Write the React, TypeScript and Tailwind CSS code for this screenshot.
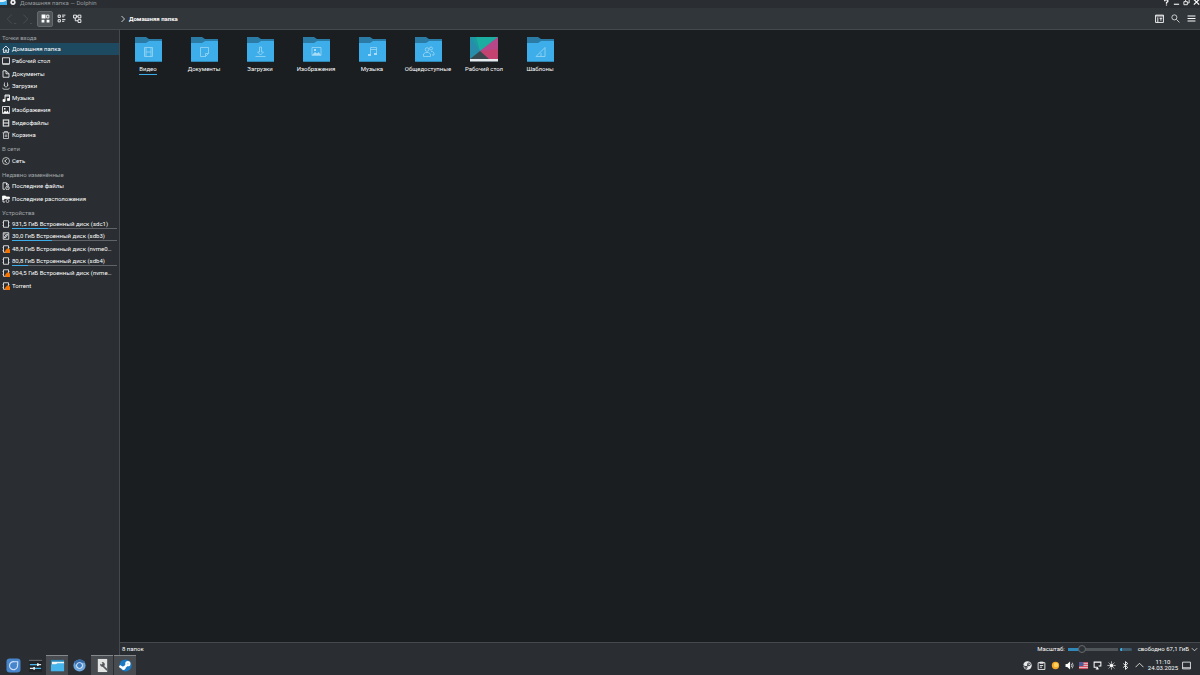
import type { ReactNode } from "react";

type IconProps = { children: ReactNode; className?: string };

function Icon({ children, className = "size-2" }: IconProps) {
  return (
    <svg viewBox="0 0 16 16" fill="none" stroke="currentColor" strokeWidth="1.6" className={`shrink-0 ${className}`} aria-hidden="true">
      {children}
    </svg>
  );
}

const glyphs = {
  home: <path d="M1 9 8 2l7 7M3 8v7h3.500v-5h3v5H13V8" />,
  desktop: <path d="M1 1.500h14v12H1zM1 14.500h14" />,
  document: <path d="M2 1.500h6l6 6v7H2zM8 1.500v6h6" />,
  download: <path d="M5 1v7M11 1v7M3 6l5 4.500L13 6M1 11.500l2 3h10l2-3" strokeWidth="1.300" />,
  music: (
    <>
      <path d="M6 13V2h9v9M6 4h9" strokeWidth="1.800" />
      <path d="M2 11h4v4H2zM11 9h4v4h-4z" fill="currentColor" />
    </>
  ),
  image: (
    <>
      <path d="M1 1h14v14H1z" />
      <path d="m2 14 4-5 2.500 3L11 9l3 5zM4 4h3v3H4z" fill="currentColor" stroke="none" />
    </>
  ),
  video: <path d="M2.500 1v14M13.500 1v14M3 8h10M3 2h10M3 14h10" strokeWidth="2" />,
  trash: <path d="M1 3.500h14M5 3V1h6v2M3 4v11h10V4M6.500 7v5M9.500 7v5" strokeWidth="1.300" />,
  network: (
    <>
      <circle cx="8" cy="8" r="7" strokeWidth="1.300" />
      <path d="m10.500 3.500-5 4.500 5 4.500M5 8h3" strokeWidth="1.300" />
    </>
  ),
  recentFile: (
    <>
      <path d="M6 14.500H2v-13h7l4 4V7M9 2v4h4" />
      <circle cx="11" cy="12" r="3.500" />
      <path d="M11 10v2h2" strokeWidth="1" />
    </>
  ),
  recentPlace: (
    <>
      <path d="M1 2h6l1.500 2H15v3H6l-2 2H1z" fill="currentColor" />
      <path d="M2 8v6h4" />
      <circle cx="11" cy="12" r="3" strokeWidth="1.300" />
    </>
  ),
  disk: <path d="M3 1.500h10v13H3zM1.500 4v1M14.500 4v1M1.500 11v1M14.500 11v1" />,
  rootDisk: (
    <>
      <path d="M2.500 1.500h11v13h-11z" />
      <path d="m5 12 1-4 5-4-1.500 5zM4 4h3" />
    </>
  ),
  lockedDisk: (
    <>
      <path d="M3 1.500h10v13H3zM1.500 4v1M14.500 4v1M1.500 11v1" />
      <path d="m6 12 4-5h4l2 3v6H7z" fill="#f67400" stroke="none" />
    </>
  ),
};

type GlyphName = keyof typeof glyphs;
type Place = { icon: GlyphName; label: string; used?: string };

const places: Place[] = [
  { icon: "home", label: "Домашняя папка" },
  { icon: "desktop", label: "Рабочий стол" },
  { icon: "document", label: "Документы" },
  { icon: "download", label: "Загрузки" },
  { icon: "music", label: "Музыка" },
  { icon: "image", label: "Изображения" },
  { icon: "video", label: "Видеофайлы" },
  { icon: "trash", label: "Корзина" },
];
const remote: Place[] = [{ icon: "network", label: "Сеть" }];
const recent: Place[] = [
  { icon: "recentFile", label: "Последние файлы" },
  { icon: "recentPlace", label: "Последние расположения" },
];
const devices: Place[] = [
  { icon: "disk", label: "931,5 ГиБ Встроенный диск (sdc1)", used: "34%" },
  { icon: "rootDisk", label: "30,0 ГиБ Встроенный диск (sdb3)", used: "38%" },
  { icon: "lockedDisk", label: "48,8 ГиБ Встроенный диск (nvme0…" },
  { icon: "disk", label: "80,8 ГиБ Встроенный диск (sdb4)", used: "15%" },
  { icon: "lockedDisk", label: "904,5 ГиБ Встроенный диск (nvme…" },
  { icon: "lockedDisk", label: "Torrent" },
];

function PlaceGroup({ title, items, active, className }: { title: string; items: Place[]; active?: string; className: string }) {
  return (
    <section>
      <h2 className="truncate pl-[2px] text-[6px] leading-[10px] text-[#a1a5a8]">{title}</h2>
      <ul className={`grid auto-rows-fr grid-cols-1 ${className}`}>
        {items.map((item) => (
          <li key={item.label} className="min-h-0 min-w-0">
            <a
              href="#"
              className={`flex h-full items-center gap-[2px] pl-[2px] pr-[2px] ${item.label === active ? "bg-[#1e4a61]" : ""}`}
            >
              <Icon>{glyphs[item.icon]}</Icon>
              <span className="flex min-w-0 flex-1 flex-col">
                <span className="whitespace-nowrap leading-[8px]">{item.label}</span>
                {item.used && (
                  <span className="h-px bg-[#606468]">
                    <span className="block h-px bg-[#3daee9]" style={{ width: item.used }} />
                  </span>
                )}
              </span>
            </a>
          </li>
        ))}
      </ul>
    </section>
  );
}

const folderMarks: Record<string, ReactNode> = {
  "Видео": <path d="M9.500 10.500h8v9h-8zM11 10.500v9M16 10.500v9M11 15h5" />,
  "Документы": <path d="M9.500 10.500h8v6l-3 3h-5zM14.500 19.500v-3h3" />,
  "Загрузки": <path d="M12.500 10v5h-2l3 3 3-3h-2v-5zM8.500 19.500h10" />,
  "Изображения": (
    <>
      <path d="M9 10.500h9v8H9z" />
      <path d="m9 18 3-3 2 1.500 1.500-1.500 2.500 3zM11 12h2v2h-2z" fill="#a9dcf7" stroke="none" />
    </>
  ),
  "Музыка": (
    <>
      <path d="M11.500 18v-7.500h6V17M11.500 12.500h6" />
      <path d="M9 17h3v2H9zM15 16h3v2h-3z" fill="#a9dcf7" stroke="none" />
    </>
  ),
  "Общедоступные": (
    <>
      <circle cx="12" cy="12.500" r="1.800" />
      <circle cx="16" cy="11.500" r="1.500" />
      <path d="M8.500 19.500v-2.500l2-1.500h3l2 1.500v2.500zM16 14.500h1.500l1.500 1.500v2h-2" />
    </>
  ),
  "Шаблоны": <path d="M9 19.500h9v-9zM14 19v-3" />,
};

function FolderIcon({ name }: { name: string }) {
  if (name === "Рабочий стол") {
    return (
      <svg viewBox="0 0 28 25" className="h-[25px] w-7" aria-hidden="true">
        <path d="M0 0h28v22H0z" fill="#1e9aa5" />
        <path d="M6 0h22L10 14z" fill="#1abc9c" opacity=".6" />
        <path d="M0 0v22l10-8z" fill="#2f86ad" opacity=".6" />
        <path d="M28 0v22H18l-8-8z" fill="#b8478a" />
        <path d="m28 12-18 2 8 8h10z" fill="#c9405f" opacity=".6" />
        <path d="m10 14 9 8H0z" fill="#3b474f" />
        <path d="M0 22h28v3H0z" fill="#e8ebed" />
        <path d="M0 24.500h28" stroke="#7c868c" />
      </svg>
    );
  }
  return (
    <svg viewBox="0 0 27 25" className="h-[25px] w-[27px]" fill="none" aria-hidden="true">
      <path d="M0 0h11l3 2h13v12H0z" fill="#2a7ba5" />
      <path d="M0 6h11l3-2h13v21H0z" fill="#3daee9" />
      <path d="M0 24.500h27" stroke="#3188b5" />
      <g stroke="#a9dcf7" strokeWidth=".7">{folderMarks[name]}</g>
    </svg>
  );
}

const folders = ["Видео", "Документы", "Загрузки", "Изображения", "Музыка", "Общедоступные", "Рабочий стол", "Шаблоны"];

function IconButton({ label, className = "", children }: { label: string; className?: string; children: ReactNode }) {
  return (
    <button type="button" aria-label={label} className={`flex shrink-0 items-center justify-center ${className}`}>
      {children}
    </button>
  );
}

function TitleBar() {
  return (
    <div className="flex h-2 shrink-0 items-start bg-[#2a2e32] text-[#95999c]">
      <svg viewBox="0 0 7 6" className="h-[6px] w-[7px]" aria-hidden="true">
        <path d="M0 0h7v5H0z" fill="#3daee9" />
        <path d="M0 0h6v1L3 2H0z" fill="#e5f3fa" />
      </svg>
      <svg viewBox="0 0 8 8" className="ml-[3px] size-[6px]" aria-hidden="true">
        <circle cx="4" cy="3" r="3.500" fill="#eff0f1" />
        <circle cx="4" cy="3" r="1.300" fill="#2a2e32" />
      </svg>
      <span className="pl-1 text-[6px] leading-[6px]">Домашняя папка — Dolphin</span>
      <div className="ml-auto flex gap-[2px] text-[#fcfcfc]">
        <IconButton label="Справка" className="h-[5px] w-2">
          <Icon className="size-[7px]"><path d="M4 5V2h7v4L8 8v3M8 12.500V15" strokeWidth="2.800" /></Icon>
        </IconButton>
        <IconButton label="Свернуть" className="h-[5px] w-2">
          <Icon className="size-[7px]"><path d="M2 12h12" strokeWidth="2.500" /></Icon>
        </IconButton>
        <IconButton label="Восстановить" className="h-[5px] w-2">
          <Icon className="size-[7px]"><path d="M2 6h8v7H2zM6 5V1h8v8h-3" strokeWidth="2" /></Icon>
        </IconButton>
        <IconButton label="Закрыть" className="h-[5px] w-2">
          <Icon className="size-[7px]"><path d="m2 1 12 12M14 1 2 13" strokeWidth="2.800" /></Icon>
        </IconButton>
      </div>
    </div>
  );
}

function ToolBar() {
  return (
    <header className="flex h-[22px] shrink-0 items-center border-b border-[#44494d] bg-[#31363b] text-[#fcfcfc]">
      <IconButton label="Назад" className="ml-[3px] size-4 text-[#4a4f53]">
        <Icon className="size-3"><path d="M9 2 3 8l6 6M12 14h3" strokeWidth="1.200" /></Icon>
      </IconButton>
      <IconButton label="Вперёд" className="size-4 text-[#4a4f53]">
        <Icon className="size-3"><path d="m3 2 6 6-6 6M12 14h3" strokeWidth="1.200" /></Icon>
      </IconButton>
      <IconButton label="Значки" className="ml-[2px] size-4 rounded-[2px] border border-[#65696d] bg-[#50555a]">
        <Icon className="size-[9px]">
          <path d="M1 1h7v7H1zM1 10h5v5H1zM10 10h5v5h-5z" fill="currentColor" stroke="none" />
          <path d="M10 2h4v5h-4z" />
        </Icon>
      </IconButton>
      <IconButton label="Компактный вид" className="size-4">
        <Icon className="size-[9px]">
          <path d="M2 2h4v4H2zM2 10h4v4H2zM9 2h6M9 5h4M9 10h6M9 13h4" />
        </Icon>
      </IconButton>
      <IconButton label="Дерево" className="size-4">
        <Icon className="size-[9px]">
          <path d="M1 2h5v5H1zM9 2h5v5H9zM9 10h5v5H9zM4 7v5h5M6 4h3" />
        </Icon>
      </IconButton>
      <nav className="ml-[34px] flex items-center gap-[2px] font-bold">
        <Icon><path d="m5 2 6 6-6 6" strokeWidth="1.500" /></Icon>
        <a href="#" className="text-[6px] leading-[8px]">Домашняя папка</a>
      </nav>
      <div className="ml-auto flex pr-px">
        <IconButton label="Разделить" className="size-4">
          <Icon className="size-[9px]"><path d="M1 2h14v13H1zM1 3.500h14M5 6v9M8 7.500h5M10.500 7v5" /></Icon>
        </IconButton>
        <IconButton label="Поиск" className="size-4">
          <Icon className="size-[9px]"><circle cx="6" cy="6" r="4.500" strokeWidth="1.300" /><path d="m9.500 9.500 5.500 5.500" strokeWidth="1.300" /></Icon>
        </IconButton>
        <IconButton label="Меню" className="size-4">
          <Icon className="size-[9px]"><path d="M1 3.500h14M1 8h14M1 12.500h14" strokeWidth="2" /></Icon>
        </IconButton>
      </div>
    </header>
  );
}

function StatusBar() {
  return (
    <footer className="flex h-[13px] shrink-0 items-center border-t border-[#44494d] bg-[#2a2e32] pl-[2px] pr-[2px]">
      <span>8 папок</span>
      <label htmlFor="zoom" className="ml-auto">Масштаб:</label>
      <input
        id="zoom"
        type="range"
        defaultValue="24"
        className="ml-[3px] h-2 w-[50px] appearance-none bg-[linear-gradient(90deg,#3087b8_28%,#50555a_28%)] bg-[length:100%_3px] bg-center bg-no-repeat [&::-webkit-slider-thumb]:size-2 [&::-webkit-slider-thumb]:appearance-none [&::-webkit-slider-thumb]:rounded-full [&::-webkit-slider-thumb]:border [&::-webkit-slider-thumb]:border-[#656a6e] [&::-webkit-slider-thumb]:bg-[#2d3236]"
      />
      <span className="ml-[2px] flex h-[3px] w-3 overflow-hidden rounded-full bg-[#3f5a6a]">
        <span className="w-[2px] bg-[#3daee9]" />
      </span>
      <span className="ml-[6px]">свободно 67,1 ГиБ</span>
      <IconButton label="Сведения о диске" className="ml-px size-2">
        <Icon className="size-[7px]"><path d="m2 5 6 6 6-6" /></Icon>
      </IconButton>
    </footer>
  );
}

function Task({ label, open, children }: { label: string; open?: boolean; children: ReactNode }) {
  return (
    <IconButton label={label} className={`h-5 w-[22px] border-t ${open ? "border-[#85898c] bg-[#484c50]" : "border-transparent"}`}>
      <svg viewBox="0 0 16 16" className="size-[15px]" fill="none" aria-hidden="true">{children}</svg>
    </IconButton>
  );
}

function Panel() {
  return (
    <div className="flex h-5 shrink-0 items-center bg-[#2a2e32]">
      <div className="flex pl-[2px]">
        <Task label="Меню приложений">
          <rect x=".5" y=".5" width="15" height="15" rx="3.500" fill="#4785cc" />
          <path d="M12 6.500a4.300 4.300 0 1 1-3-2.500M9 4h3.500v3" stroke="#cfe3f8" strokeWidth="1.200" />
        </Task>
        <Task label="Параметры системы">
          <rect x="1" y="2" width="14" height="13" rx="1" fill="#202428" />
          <path d="M1 2.500h14" stroke="#74797d" />
          <path d="M2 7h8M6 11h8" stroke="#48b7ef" strokeWidth="1.200" />
          <path d="M10 7h4M2 11h4" stroke="#e8eaeb" strokeWidth="1.200" />
          <path d="M10.500 5.500v3M6.500 9.500v3" stroke="#fff" strokeWidth="1.600" />
        </Task>
        <Task label="Dolphin" open>
          <path d="M1 2h14v12H1z" fill="#2485b7" />
          <path d="M2 4h13v3H2z" fill="#eef5f9" />
          <path d="M1 7h5l2-1.500h7V14H1z" fill="#45b5eb" />
        </Task>
        <Task label="Chromium">
          <circle cx="8" cy="8" r="6.500" fill="#6fa5dd" />
          <path d="M8 1.500a6.500 6.500 0 0 1 6 3.500H8L5 9 2.500 4.500A6.500 6.500 0 0 1 8 1.500Z" fill="#3469a8" />
          <circle cx="8" cy="8" r="3.500" fill="#e4effa" />
          <circle cx="8" cy="8" r="2.600" fill="#397bc1" />
        </Task>
      </div>
      <div className="flex gap-px pl-px">
        <Task label="Настройка" open>
          <path d="M3 1h10v14H3z" fill="#e2e3e3" />
          <path d="m8 8 4.500 4.500" stroke="#55595d" strokeWidth="1.800" strokeLinecap="round" />
          <path d="M5.500 6 7 7l1.200-1.500L7 4.500a2.500 2.500 0 1 1-1.500 3z" fill="#55595d" />
        </Task>
        <Task label="Steam" open>
          <circle cx="8" cy="8" r="6.500" fill="#1979c5" />
          <path d="m1.500 8.500 4 2.500L9 8" stroke="#fff" strokeWidth="2.500" />
          <circle cx="10.500" cy="6" r="2.800" fill="#fff" />
          <circle cx="6" cy="11" r="1.900" fill="#fff" />
          <circle cx="10.500" cy="6" r="1" fill="#bfdef4" />
        </Task>
      </div>
      <div className="ml-auto flex items-center pr-[9px]">
        <div className="flex items-center gap-[5px]">
          <Icon className="size-[9px]">
            <circle cx="8" cy="8" r="7.500" fill="#e9eaeb" stroke="none" />
            <path d="m0 8 6 3 4-5" stroke="#2a2e32" />
            <circle cx="10.500" cy="6" r="2.500" stroke="#2a2e32" />
            <circle cx="5.500" cy="11.500" r="1.800" stroke="#2a2e32" />
          </Icon>
          <Icon className="size-[9px]"><path d="M2 3h12v12H2zM5 2h6v2H5zM5 8h6M5 11h4" strokeWidth="1.500" /></Icon>
          <Icon className="size-[9px]">
            <circle cx="8" cy="8" r="6.500" fill="#f4a62a" stroke="none" />
            <circle cx="9" cy="7" r="4" fill="#ffd05a" stroke="none" />
          </Icon>
          <Icon className="size-[9px]">
            <path d="M1 5.500h3L9 1v14l-5-4.500H1z" fill="currentColor" stroke="none" />
            <path d="M11 5q2 3 0 6M13 3q3 5 0 10" strokeWidth="1.200" />
          </Icon>
          <Icon className="size-[9px]">
            <path d="M0 2h16v12H0z" fill="#e6c9cf" stroke="none" />
            <path d="M0 3h16M0 6.500h16M0 10h16M0 13.500h16" stroke="#cf4055" strokeWidth="1.700" />
            <path d="M0 2h8v7H0z" fill="#4c5b96" stroke="none" />
          </Icon>
          <Icon className="size-[9px]"><path d="M8 11H2V2h12v7h-4M5 14h5M8 11v3" strokeWidth="1.800" /></Icon>
          <Icon className="size-[9px]">
            <circle cx="8" cy="8" r="2.800" fill="currentColor" />
            <path d="M8 1v2M8 13v2M1 8h2M13 8h2M3 3l1.500 1.500M11.500 11.500 13 13M13 3l-1.500 1.500M4.500 11.500 3 13" />
          </Icon>
          <Icon className="size-[9px]"><path d="m4 4.500 8 7-4 3.500V1l4 3.500-8 7" /></Icon>
          <Icon className="size-[9px]"><path d="m1 11 7-7 7 7" strokeWidth="1.400" /></Icon>
        </div>
        <time className="ml-1 mr-1 text-center text-[6px] leading-[6px]">
          <span className="block">11:10</span>
          <span className="block">24.03.2025</span>
        </time>
        <Icon className="size-[9px]"><path d="M1 2h14v12H1zM1 12h14" strokeWidth="1.400" /></Icon>
      </div>
    </div>
  );
}

export default function App() {
  return (
    <div className="flex h-screen flex-col overflow-hidden bg-[#2a2e32] font-[Roboto,sans-serif] text-[6px] leading-[8px] text-[#fcfcfc]">
      <TitleBar />
      <ToolBar />
      <div className="flex min-h-0 flex-1">
        <aside className="flex w-[120px] shrink-0 flex-col gap-[3px] border-r border-[#44494d] bg-[#2a2e32] pt-[3px]">
          <PlaceGroup title="Точки входа" items={places} active="Домашняя папка" className="h-[98px]" />
          <PlaceGroup title="В сети" items={remote} className="h-[13px]" />
          <PlaceGroup title="Недавно изменённые" items={recent} className="h-[25px]" />
          <PlaceGroup title="Устройства" items={devices} className="h-[74px]" />
        </aside>
        <div className="flex min-w-0 flex-1 flex-col">
          <main className="flex-1 bg-[#1b1e20] pt-[7px]">
            <ul className="grid grid-cols-[repeat(auto-fill,56px)]">
              {folders.map((name, index) => (
                <li key={name}>
                  <a href="#" className="flex flex-col items-center gap-[2px]">
                    <FolderIcon name={name} />
                    <span className={`border-b leading-[10px] ${index === 0 ? "border-[#3daee9]" : "border-transparent"}`}>{name}</span>
                  </a>
                </li>
              ))}
            </ul>
          </main>
          <StatusBar />
        </div>
      </div>
      <Panel />
    </div>
  );
}
